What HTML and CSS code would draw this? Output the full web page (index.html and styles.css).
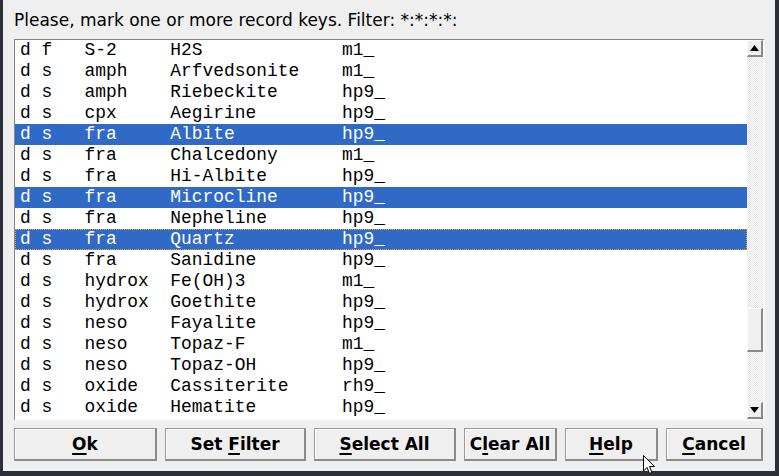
FILE: index.html
```html
<!DOCTYPE html>
<html>
<head>
<meta charset="utf-8">
<link rel="stylesheet" href="styles.css">
</head>
<body>
<div class="dialog">
  <div class="title">Please, mark one or more record keys. Filter: *:*:*:*:</div>
  <div class="listframe">
    <div class="list">
      <div class="row">d f   S-2     H2S             m1_</div>
      <div class="row">d s   amph    Arfvedsonite    m1_</div>
      <div class="row">d s   amph    Riebeckite      hp9_</div>
      <div class="row">d s   cpx     Aegirine        hp9_</div>
      <div class="row sel">d s   fra     Albite          hp9_</div>
      <div class="row">d s   fra     Chalcedony      m1_</div>
      <div class="row">d s   fra     Hi-Albite       hp9_</div>
      <div class="row sel">d s   fra     Microcline      hp9_</div>
      <div class="row">d s   fra     Nepheline       hp9_</div>
      <div class="row sel focus">d s   fra     Quartz          hp9_</div>
      <div class="row">d s   fra     Sanidine        hp9_</div>
      <div class="row">d s   hydrox  Fe(OH)3         m1_</div>
      <div class="row">d s   hydrox  Goethite        hp9_</div>
      <div class="row">d s   neso    Fayalite        hp9_</div>
      <div class="row">d s   neso    Topaz-F         m1_</div>
      <div class="row">d s   neso    Topaz-OH        hp9_</div>
      <div class="row">d s   oxide   Cassiterite     rh9_</div>
      <div class="row">d s   oxide   Hematite        hp9_</div>
    </div>
    <div class="scrollbar">
      <div class="arrow">
        <svg width="9" height="6" viewBox="0 0 9 6"><polygon points="4.5,0 9,6 0,6" fill="#000"/></svg>
      </div>
      <div class="trough">
        <div class="thumb"></div>
      </div>
      <div class="arrow">
        <svg width="9" height="6" viewBox="0 0 9 6"><polygon points="0,0 9,0 4.5,6" fill="#000"/></svg>
      </div>
    </div>
  </div>
  <div class="buttons">
    <div class="btn"><span><u>O</u>k</span></div>
    <div class="btn"><span>Set <u>F</u>ilter</span></div>
    <div class="btn"><span><u>S</u>elect All</span></div>
    <div class="btn"><span>C<u>l</u>ear All</span></div>
    <div class="btn"><span><u>H</u>elp</span></div>
    <div class="btn"><span><u>C</u>ancel</span></div>
  </div>
</div>
<svg class="cursor" width="14" height="22" viewBox="0 0 14 22">
  <path d="M0.5,0.5 L0.5,16 L4,12.5 L6.5,18.5 L9,17.5 L6.5,11.5 L11.5,11.5 Z" fill="#fff" stroke="#000" stroke-width="1"/>
</svg>
</body>
</html>
```

FILE: styles.css
```css
html, body {
  margin: 0;
  padding: 0;
}
body {
  width: 779px;
  height: 476px;
  background: #2c2f38;
  overflow: hidden;
  position: relative;
}
.dialog {
  margin-left: 3px;
  width: 772px;
  height: 471px;
  background: #efefef;
  display: flex;
  flex-direction: column;
}
.title {
  height: 39px;
  line-height: 40px;
  padding-left: 11px;
  font-family: "DejaVu Sans", sans-serif;
  font-size: 17px;
  color: #000;
  white-space: nowrap;
}
.listframe {
  margin-left: 11px;
  width: 748px;
  height: 379px;
  border-top: 1px solid #858585;
  border-left: 1px solid #858585;
  border-right: 2px solid #f8f8f8;
  border-bottom: 2px solid #f8f8f8;
  display: flex;
}
.list {
  width: 732px;
  background: #fff;
  overflow: hidden;
}
.row {
  height: 21px;
  line-height: 21px;
  padding-left: 5px;
  font-family: "Liberation Mono", monospace;
  font-size: 17.9px;
  color: #000;
  white-space: pre;
}
.row.sel {
  background: #3169c6;
  color: #fff;
}
.row.focus {
  outline: 1px dotted #d8a54a;
  outline-offset: -1px;
}
.scrollbar {
  width: 16px;
  display: flex;
  flex-direction: column;
  background: repeating-conic-gradient(#e6e6e6 0 25%, #fbfbfb 0 50%) 0 0 / 2px 2px;
}
.arrow {
  height: 17px;
  box-sizing: border-box;
  background: #efefef;
  border-top: 1px solid #fdfdfd;
  border-left: 1px solid #fdfdfd;
  border-right: 2px solid #8a8a8a;
  border-bottom: 2px solid #8a8a8a;
  display: flex;
  align-items: center;
  justify-content: center;
}
.trough {
  flex: 1;
}
.thumb {
  margin-top: 251px;
  height: 44px;
  box-sizing: border-box;
  background: #efefef;
  border-top: 1px solid #fdfdfd;
  border-left: 1px solid #fdfdfd;
  border-right: 2px solid #8a8a8a;
  border-bottom: 2px solid #8a8a8a;
}
.buttons {
  margin-top: 7px;
  margin-left: 11px;
  display: grid;
  grid-template-columns: 143px 141px 142px 93px 93px 97px;
  column-gap: 8px;
}
.btn {
  height: 33px;
  box-sizing: border-box;
  background: #efefef;
  border-top: 1px solid #9a9a9a;
  border-left: 1px solid #9a9a9a;
  border-right: 2px solid #8a8a8a;
  border-bottom: 2px solid #8a8a8a;
  box-shadow: inset 1px 1px 0 #fdfdfd;
  display: flex;
  align-items: center;
  justify-content: center;
  font-family: "DejaVu Sans", sans-serif;
  font-weight: bold;
  font-size: 17px;
  color: #000;
  white-space: nowrap;
}
.btn span {
  white-space: pre;
}
.btn u {
  text-decoration-thickness: 2px;
  text-underline-offset: 3px;
}
.cursor {
  position: absolute;
  left: 643px;
  top: 455px;
}
```
